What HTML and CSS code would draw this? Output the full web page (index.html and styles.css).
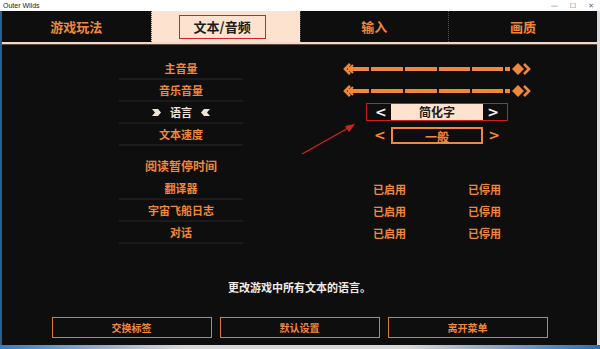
FILE: index.html
```html
<!DOCTYPE html>
<html lang="zh-CN">
<head>
    <meta charset="UTF-8">
    <title>Outer Wilds</title>
    <link rel="stylesheet" href="styles.css">
</head>
<body>
    <div id="titlebar">
        <span class="name">Outer Wilds</span>
        <div class="ctl">
            <span>—</span>
            <span>☐</span>
            <span>✕</span>
        </div>
    </div>
    <div id="game">
        <div id="tabs">
            <div class="tab">游戏玩法</div>
            <div class="tab on"><span class="mark">文本/音频</span></div>
            <div class="tab">输入</div>
            <div class="tab">画质</div>
        </div>

        <div id="settings">
            <div class="label">主音量</div>
            <div class="ctrl">
                <svg class="slider" viewBox="0 0 190 12" width="190" height="12">
                    <polyline points="8,1 3,6 8,11" fill="none" stroke="#f0873a" stroke-width="2.6"/>
                    <polyline points="11,2 7,6 11,10" fill="none" stroke="#f0873a" stroke-width="2"/>
                    <rect x="6" y="4" width="162" height="4" fill="#f0873a"/>
                    <rect x="27" y="3" width="2" height="6" fill="#0e0e0e"/>
                    <rect x="61" y="3" width="2" height="6" fill="#0e0e0e"/>
                    <rect x="95" y="3" width="2" height="6" fill="#0e0e0e"/>
                    <rect x="128" y="3" width="2" height="6" fill="#0e0e0e"/>
                    <rect x="161" y="3" width="2" height="6" fill="#0e0e0e"/>
                    <polygon points="176,0 182,6 176,12 170,6" fill="#f0873a"/>
                    <polyline points="182,1 187,6 182,11" fill="none" stroke="#f0873a" stroke-width="2.6"/>
                </svg>
            </div>
            <div class="ctrl"></div>

            <div class="label">音乐音量</div>
            <div class="ctrl">
                <svg class="slider" viewBox="0 0 190 12" width="190" height="12">
                    <polyline points="8,1 3,6 8,11" fill="none" stroke="#f0873a" stroke-width="2.6"/>
                    <polyline points="11,2 7,6 11,10" fill="none" stroke="#f0873a" stroke-width="2"/>
                    <rect x="6" y="4" width="162" height="4" fill="#f0873a"/>
                    <rect x="27" y="3" width="2" height="6" fill="#0e0e0e"/>
                    <rect x="61" y="3" width="2" height="6" fill="#0e0e0e"/>
                    <rect x="95" y="3" width="2" height="6" fill="#0e0e0e"/>
                    <rect x="128" y="3" width="2" height="6" fill="#0e0e0e"/>
                    <rect x="161" y="3" width="2" height="6" fill="#0e0e0e"/>
                    <polygon points="176,0 182,6 176,12 170,6" fill="#f0873a"/>
                    <polyline points="182,1 187,6 182,11" fill="none" stroke="#f0873a" stroke-width="2.6"/>
                </svg>
            </div>
            <div class="ctrl"></div>

            <div class="label sel">
                <svg width="9" height="7" viewBox="0 0 9 7"><polygon points="0,0 6,0 9,3.5 6,7 0,7 3,3.5" fill="#efe3d6"/></svg>
                <span>语言</span>
                <svg width="9" height="7" viewBox="0 0 9 7"><polygon points="9,0 3,0 0,3.5 3,7 9,7 6,3.5" fill="#efe3d6"/></svg>
            </div>
            <div class="ctrl">
                <div class="picker focus">
                    <span class="arr">&lt;</span>
                    <span class="val">简化字</span>
                    <span class="arr">&gt;</span>
                </div>
            </div>
            <div class="ctrl"></div>

            <div class="label">文本速度</div>
            <div class="ctrl">
                <div class="picker">
                    <span class="arr">&lt;</span>
                    <span class="val">一般</span>
                    <span class="arr">&gt;</span>
                </div>
            </div>
            <div class="ctrl"></div>

            <div class="label head">阅读暂停时间</div>
            <div class="ctrl"></div>
            <div class="ctrl"></div>

            <div class="label">翻译器</div>
            <div class="ctrl half">已启用</div>
            <div class="ctrl half">已停用</div>

            <div class="label">宇宙飞船日志</div>
            <div class="ctrl half">已启用</div>
            <div class="ctrl half">已停用</div>

            <div class="label">对话</div>
            <div class="ctrl half">已启用</div>
            <div class="ctrl half">已停用</div>
        </div>

        <p id="desc">更改游戏中所有文本的语言。</p>

        <div id="btns">
            <span>交换标签</span>
            <span>默认设置</span>
            <span>离开菜单</span>
        </div>
    </div>
    <div id="taskbar"></div>

    <svg id="arrow" width="600" height="349" viewBox="0 0 600 349">
        <line x1="302" y1="154" x2="350" y2="127" stroke="#d42222" stroke-width="1.3"/>
        <polygon points="355,124 345,126 349,132" fill="#d42222"/>
    </svg>
</body>
</html>
```

FILE: styles.css
```css
body, div, p, span{
    margin:0;
    padding:0;
}
body{
    width:600px;
    height:349px;
    overflow:hidden;
    background:#dcdcdc;
    font-family:"Noto Sans CJK SC", "Noto Sans", sans-serif;
    position:relative;
}
#titlebar{
    height:11px;
    background:#fff;
    display:flex;
    align-items:center;
    justify-content:space-between;
    padding:0 6px 0 3px;
}
#titlebar .name{
    font-family:"Liberation Sans", sans-serif;
    font-size:7px;
    color:#222;
}
#titlebar .ctl{
    display:flex;
    gap:12px;
    font-family:"DejaVu Sans", sans-serif;
    font-size:7px;
    color:#666;
}
#game{
    width:595px;
    height:334px;
    margin-left:2px;
    background:#0e0e0e;
    display:flex;
    flex-direction:column;
    box-shadow:-2px 0 0 #2b5f8c;
}
#tabs{
    display:grid;
    grid-template-columns:repeat(4, 1fr);
    height:31px;
    border-bottom:2px solid #efd9c8;
    box-shadow:0 1px 0 #5a4a40;
}
#tabs .tab{
    display:flex;
    align-items:center;
    justify-content:center;
    color:#f0873a;
    font-size:13px;
    font-weight:bold;
    border-left:1px dotted #555;
}
#tabs .tab:first-child{
    border-left:none;
}
#tabs .on{
    background:#fde2cf;
    color:#1c1c1c;
}
#tabs .mark{
    width:87px;
    height:24px;
    line-height:22px;
    text-align:center;
    border:1px solid #d42222;
    box-sizing:border-box;
    margin-right:7px;
}
#settings{
    display:grid;
    grid-template-columns:124px 100px 94px 95px;
    padding-left:117px;
    margin-top:14px;
}
#settings .label{
    grid-column:1;
    height:20px;
    line-height:20px;
    text-align:center;
    color:#f0873a;
    font-size:11px;
    font-weight:bold;
    border-bottom:2px solid #1b1b1b;
}
#settings .sel{
    display:flex;
    align-items:center;
    justify-content:center;
    gap:9px;
    color:#efe3d6;
}
#settings .head{
    height:32px;
    line-height:22px;
    padding-top:9px;
    box-sizing:border-box;
    font-size:12px;
    border-bottom:none;
}
#settings .ctrl{
    display:flex;
    align-items:center;
    justify-content:center;
    font-size:11px;
    font-weight:bold;
    color:#f0873a;
}
#settings .ctrl:nth-child(3n+2){
    grid-column:3 / span 2;
    margin-left:-1px;
}
#settings .ctrl:nth-child(3n){
    display:none;
}
#settings .ctrl.half{
    grid-column:auto;
    display:flex;
}
#settings .ctrl.half:nth-child(3n+2){
    grid-column:3;
}
.picker{
    display:flex;
    align-items:center;
    justify-content:space-between;
    width:142px;
    height:18px;
    padding:0 8px;
    box-sizing:border-box;
}
.picker.focus{
    border:1px solid #c81f1f;
    margin-top:-2px;
}
.picker .arr{
    font-family:"DejaVu Sans", sans-serif;
    font-weight:bold;
    font-size:14px;
    color:#f0873a;
}
.picker.focus .arr{
    color:#f5efe8;
}
.picker .val{
    width:92px;
    height:17px;
    line-height:15px;
    text-align:center;
    border:2px solid #f0873a;
    box-sizing:border-box;
    color:#f0873a;
    font-size:12px;
}
.picker.focus .val{
    height:16px;
    line-height:16px;
    border:none;
    background:#fde2cf;
    color:#1c1c1c;
}
#desc{
    margin-top:35px;
    text-align:center;
    font-size:11px;
    font-weight:bold;
    line-height:16px;
    color:#f1ebe4;
}
#btns{
    display:flex;
    justify-content:center;
    gap:8px;
    margin-top:22px;
}
#btns span{
    width:160px;
    height:21px;
    line-height:19px;
    box-sizing:border-box;
    border:1.5px solid #e07a3a;
    text-align:center;
    color:#f0873a;
    font-size:10px;
    font-weight:bold;
}
#taskbar{
    height:4px;
    background:linear-gradient(90deg, #3b7cc0 0%, #d6d6d6 30%, #d6d6d6 68%, #2f6fb3 100%);
}
#arrow{
    position:absolute;
    left:0;
    top:0;
    pointer-events:none;
}
```
